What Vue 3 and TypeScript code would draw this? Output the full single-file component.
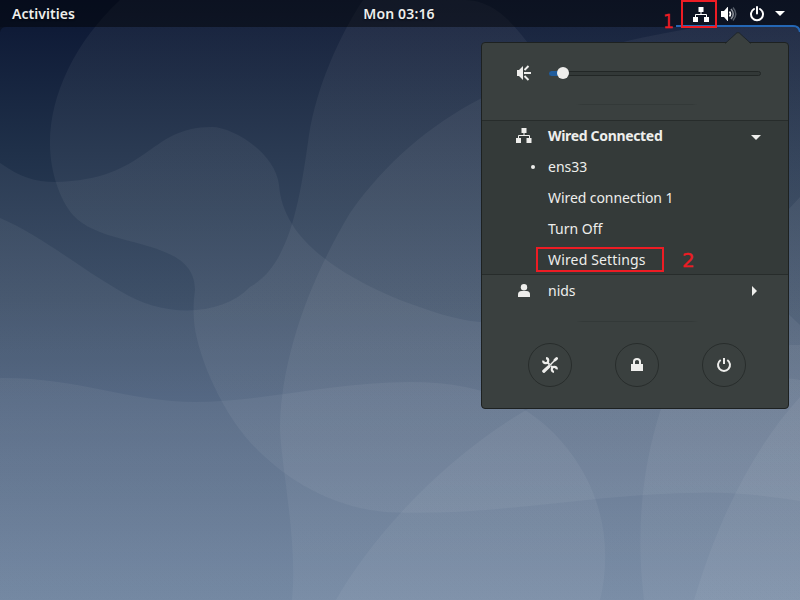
<script setup lang="ts">
import { ref } from 'vue'

interface Connection {
  label: string
  active?: boolean
  marked?: boolean
  cls: string
}

const volume = ref(6)
const connections: Connection[] = [
  { label: 'ens33', active: true, cls: 't-ens' },
  { label: 'Wired connection 1', cls: 't-conn' },
  { label: 'Turn Off', cls: 't-off' },
  { label: 'Wired Settings', marked: true, cls: 't-set' },
]
</script>

<template>
  <div class="desktop">
    <svg class="wallpaper" viewBox="0 0 800 600" width="800" height="600">
      <defs>
        <linearGradient id="base" gradientUnits="userSpaceOnUse" x1="0" y1="0" x2="0" y2="600">
          <stop offset="0" stop-color="#0b1733" />
          <stop offset=".05" stop-color="#0f1b37" />
          <stop offset=".25" stop-color="#1f3049" />
          <stop offset=".5" stop-color="#334660" />
          <stop offset=".667" stop-color="#435876" />
          <stop offset="1" stop-color="#617896" />
        </linearGradient>
        <linearGradient id="veil" gradientUnits="userSpaceOnUse" x1="0" y1="0" x2="0" y2="600">
          <stop offset="0" stop-color="#fff" stop-opacity=".047" />
          <stop offset=".5" stop-color="#fff" stop-opacity=".053" />
          <stop offset="1" stop-color="#fff" stop-opacity=".044" />
        </linearGradient>
      </defs>
      <rect width="800" height="600" fill="url(#base)" />
      <g fill="url(#veil)">
        <path d="M120 0C75 42 50 95 50 143C50 172 60 200 73 215C104 250 195 236 195 290C194 300 193 305 194 320C196 350 218 406 250 442C280 475 330 510 395 512.500C500 516 595 493 700 492.700C735 492 770 496 800 501V0Z" />
        <path d="M363 0C340 35 317 85 309 135C300 200 290 265 250 287C222 316 165 319 120 291C80 268 40 235 0 218V600H800V325C720 250 600 150 560 90C530 46 505 0 465 0Z" />
        <path d="M0 163C20 177 35 182 55 182C150 180 147 127 212 127C232 127 275 152 279 185C283 240 340 275 400 300C430 311 455 320 480 322C590 333 690 346 800 345V600H0Z" />
        <path d="M292 600C298 540 280 460 280 425C282 355 310 280 350 213C385 163 430 125 480 99C535 65 600 43 700 27H800V600Z" />
        <path d="M0 378C75 377 130 402 195 402C260 402 335 382 410 382C480 382 526 402 560 440C605 490 612 550 600 600H0Z" />
        <path d="M336 600C370 540 440 460 528 409C620 350 735 270 800 197V600Z" />
        <path d="M644 600C636 535 641 470 661 409C680 390 740 370 800 380V600Z" />
        <path d="M694 600C718 520 752 450 800 397V600Z" />
      </g>
    </svg>

    <header class="topbar">
      <span class="activities">Activities</span>
      <span class="clock">Mon 03:16</span>
      <div class="status">
        <svg width="16" height="16" viewBox="0 0 16 16"><path d="M5.500 1h5v5h-5zM0 11h5v5H0zM11 11h5v5h-5z" fill="#fff" /><path d="M8 6v3M2.500 11V8.500h11V11" fill="none" stroke="#fff" /></svg>
        <svg width="16" height="16" viewBox="0 0 16 16"><path d="M0 5h3l3.500-4H7v14h-.5L3 11H0z" fill="#fff" /><path d="M8.500 5.500q2 2.500 0 5" fill="none" stroke="#fff" stroke-width="1.600" /><path d="M10 3q4.500 5 0 10" fill="none" stroke="#8b9099" stroke-width="1.600" /><path d="M12 1.500q5.500 6.500 0 13" fill="none" stroke="#565d69" stroke-width="1.500" /></svg>
        <svg width="16" height="16" viewBox="0 0 16 16"><path d="M5 3A6 6 0 1 0 11 3M8 1v6.500" fill="none" stroke="#fff" stroke-width="2" stroke-linecap="round" /></svg>
        <svg class="bar-caret" width="10" height="5" viewBox="0 0 10 5"><path d="M0 0h10L5 5z" fill="#fff" /></svg>
      </div>
    </header>
    <svg class="bar-edge" width="800" height="8" viewBox="0 0 800 8">
      <path d="M0 2H6Q1 2 0 7Z" fill="#0a1224" />
      <path d="M794 0H800V8Q799 2 794 2Z" fill="#111827" />
      <path d="M676 1H793Q799 1 800 7" fill="none" stroke="#2467b5" stroke-width="2" />
    </svg>
    <div class="mark mark-network"></div>
    <span class="step step-one">1</span>

    <section class="menu">
      <svg class="pointer" width="26" height="12" viewBox="0 0 26 12"><path d="M0 12L11.500 1.200Q13 0 14.500 1.200L26 12Z" fill="#3a403f" /><path d="M0 11.500L11.500 1.200Q13 0 14.500 1.200L26 11.500" fill="none" stroke="#1c2222" stroke-opacity=".75" /></svg>
      <div class="volume">
        <svg width="16" height="16" viewBox="0 0 16 16"><path d="M0 5h2l4-4v14l-4-4H0z" fill="#eeeeec" /><path d="M7 8h7M7.500 5l4-4M7.500 11l4 4" fill="none" stroke="#eeeeec" stroke-width="1.900" /></svg>
        <div class="track">
          <div class="fill" :style="{ width: volume + '%' }"></div>
          <div class="knob" :style="{ left: volume + '%' }"></div>
        </div>
      </div>
      <div class="rule rule-top"></div>

      <div class="network">
        <div class="row head">
          <svg width="16" height="16" viewBox="0 0 16 16"><path d="M5.500 0h5v5h-5zM0 10h5v5H0zM10.500 10h5v5h-5z" fill="#eeeeec" /><path d="M8 5v3M2.500 10V7.500h11V10" fill="none" stroke="#eeeeec" /></svg>
          <span class="label t-head">Wired Connected</span>
          <svg class="caret caret-down" width="10" height="5" viewBox="0 0 10 5"><path d="M0 0h10L5 5z" fill="#eeeeec" /></svg>
        </div>
        <div v-for="c in connections" :key="c.label" class="row">
          <i class="dot" :class="{ on: c.active }"></i>
          <span class="label" :class="c.cls">{{ c.label }}</span>
          <template v-if="c.marked">
            <div class="mark mark-settings"></div>
            <span class="step step-two">2</span>
          </template>
        </div>
      </div>

      <div class="row user">
        <svg width="16" height="16" viewBox="0 0 16 16"><circle cx="8" cy="4.200" r="3.200" fill="#eeeeec" /><path d="M2 14v-2.500Q2 8 5.500 8h5Q14 8 14 11.500V14z" fill="#eeeeec" /></svg>
        <span class="label t-user">nids</span>
        <svg class="caret caret-right" width="5" height="10" viewBox="0 0 5 10"><path d="M0 0v10L5 5z" fill="#eeeeec" /></svg>
      </div>
      <div class="rule rule-bottom"></div>

      <div class="actions">
        <button>
          <svg width="16" height="16" viewBox="0 0 16 16"><g fill="none" stroke="#eeeeec"><path d="M1.800 14.200L6.800 9.600" stroke-width="3.200" stroke-linecap="round" /><path d="M7 9.200L13.500 2.600" stroke-width="1.400" /><path d="M13 3L14.600 1.500" stroke-width="2.800" stroke-linecap="round" /><path d="M5.500 5.500L7.600 7.600M9 9L10.800 10.800" stroke-width="2" /><path d="M1.200 3.600A2.500 2.500 0 1 0 4 1.200M14.800 12.400A2.500 2.500 0 1 0 12 14.800" stroke-width="2.200" /></g></svg>
        </button>
        <button>
          <svg width="16" height="16" viewBox="0 0 16 16"><path d="M2 7h12v7H2z" fill="#eeeeec" /><path d="M5 7.500V4.500Q5 2 8 2T11 4.500V7.500" fill="none" stroke="#eeeeec" stroke-width="2" /></svg>
        </button>
        <button>
          <svg width="16" height="16" viewBox="0 0 16 16"><path d="M4.700 3A6 6 0 1 0 11.300 3M8 1v6" fill="none" stroke="#eeeeec" stroke-width="2" /></svg>
        </button>
      </div>
    </section>
  </div>
</template>

<style>
body {
  margin: 0;
  overflow: hidden;
}
</style>

<style scoped>
.desktop {
  position: relative;
  width: 800px;
  height: 600px;
  overflow: hidden;
  font-family: "Noto Sans", "Open Sans", sans-serif;
  font-size: 14px;
  color: #eeeeec;
}
.wallpaper {
  position: absolute;
  inset: 0;
}
.topbar {
  position: relative;
  display: grid;
  grid-template-columns: 1fr auto 1fr;
  align-items: center;
  height: 27px;
  box-sizing: border-box;
  padding: 0 15px 0 12px;
  background: rgba(0, 0, 0, 0.45);
  font-weight: 600;
  text-shadow: 0 1px 2px rgba(0, 0, 0, 0.6);
}
.activities {
  letter-spacing: 0.05px;
}
.clock {
  letter-spacing: 0.15px;
  padding-left: 1px;
}
.status {
  display: flex;
  justify-content: flex-end;
  align-items: center;
  gap: 12px;
}
.bar-caret {
  margin-left: -2px;
}
.bar-edge {
  position: absolute;
  top: 25px;
  left: 0;
}
.mark {
  position: absolute;
  box-sizing: border-box;
  border: 2px solid #ed1c24;
}
.mark-network {
  left: 681px;
  top: 0;
  width: 36px;
  height: 28px;
}
.mark-settings {
  left: 54px;
  top: 3px;
  width: 128px;
  height: 25px;
}
.step {
  position: absolute;
  font: 20px/24px "DejaVu Sans", sans-serif;
  color: #ed1c24;
  -webkit-text-stroke: 0.3px #ed1c24;
}
.step-one {
  left: 663px;
  top: 9px;
  transform: scaleX(0.85);
  transform-origin: 0 0;
}
.step-two {
  left: 200px;
  top: 4px;
}
.menu {
  position: absolute;
  left: 481px;
  top: 42px;
  width: 308px;
  height: 367px;
  box-sizing: border-box;
  border: 1px solid #1d2121;
  border-radius: 4px;
  background: #3a403f;
}
.pointer {
  position: absolute;
  left: 243px;
  top: -11px;
}
.volume {
  display: flex;
  align-items: center;
  height: 60px;
  padding: 0 27px 0 35px;
  gap: 16px;
}
.track {
  position: relative;
  flex: 1;
  height: 5px;
  box-sizing: border-box;
  border: 1px solid #222726;
  border-radius: 3px;
  background: #323837;
}
.fill {
  height: 5px;
  margin: -1px;
  border-radius: 3px;
  background: #215d9c;
}
.knob {
  position: absolute;
  top: -5px;
  width: 12px;
  height: 12px;
  margin-left: -6px;
  border-radius: 50%;
  background: #eeeeec;
}
.rule {
  width: 122px;
  height: 1px;
  margin: 0 0 0 94px;
  background: linear-gradient(90deg, transparent, #333938 5%, #333938 95%, transparent);
}
.rule-top {
  margin-top: 1px;
}
.network {
  margin-top: 15px;
  height: 155px;
  box-sizing: border-box;
  border-top: 1px solid #272c2b;
  border-bottom: 1px solid #272c2b;
  background: #343a39;
}
.row {
  position: relative;
  display: flex;
  align-items: center;
  height: 31px;
  box-sizing: border-box;
  padding: 0 27px 0 34px;
}
.label {
  margin-left: 16px;
  line-height: 20px;
  white-space: nowrap;
}
.head {
  height: 30px;
  padding-bottom: 1px;
  font-weight: 700;
}
.t-head {
  letter-spacing: -0.33px;
}
.t-conn {
  letter-spacing: -0.08px;
}
.t-set {
  letter-spacing: 0.15px;
}
.caret {
  margin-left: auto;
}
.caret-down {
  margin-top: 3px;
}
.caret-right {
  margin-right: 4px;
}
.dot {
  width: 4px;
  height: 4px;
  margin: 0 -3px 0 15px;
  border-radius: 50%;
}
.dot.on {
  background: #eeeeec;
}
.user {
  height: 32px;
}
.rule-bottom {
  margin-top: 14px;
}
.actions {
  display: flex;
  justify-content: space-between;
  margin-top: 21px;
  padding: 0 42px 0 46px;
}
button {
  display: grid;
  place-items: center;
  width: 44px;
  height: 44px;
  padding: 0;
  border: 1px solid #282d2c;
  border-radius: 50%;
  background: none;
}
</style>
